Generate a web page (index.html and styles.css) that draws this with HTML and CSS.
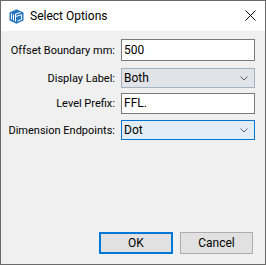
FILE: index.html
```html
<!DOCTYPE html>
<html>
<head>
<meta charset="utf-8">
<link rel="stylesheet" href="styles.css">
</head>
<body>
<div class="window">
  <div class="titlebar">
    <svg class="app-icon" width="15" height="15" viewBox="0 0 15 15">
      <path d="M7.5 0.3 L14.5 3.5 V11.5 L7.5 14.7 L0.5 11.5 V3.5 Z" fill="#2a78c0"/>
      <path d="M2.5 4.5 V10.5 M4.5 5.5 V11.5" fill="none" stroke="#fff" stroke-width="1"/>
      <path d="M6.5 5 L11.5 3.5 M6.5 7.5 L12.5 5.8 M6.5 5 V12.5 M12.5 5.8 V10.5 L8.5 12" fill="none" stroke="#fff" stroke-width="1"/>
    </svg>
    <span class="title">Select Options</span>
    <svg class="close" width="11" height="11" viewBox="0 0 11 11">
      <path d="M0.5 0.5 L10.5 10.5 M10.5 0.5 L0.5 10.5" stroke="#000" stroke-width="1"/>
    </svg>
  </div>
  <div class="form">
    <div class="row row1">
      <label class="label">Offset Boundary mm:</label>
      <div class="textbox tall">500</div>
    </div>
    <div class="row row2">
      <label class="label">Display Label:</label>
      <div class="combo">
        <span>Both</span>
        <svg class="chev" width="8" height="5" viewBox="0 0 8 5"><path d="M0.5 0.5 L4 4 L7.5 0.5" fill="none" stroke="#606060" stroke-width="1"/></svg>
      </div>
    </div>
    <div class="row row3">
      <label class="label">Level Prefix:</label>
      <div class="textbox">FFL.</div>
    </div>
    <div class="row row4">
      <label class="label">Dimension Endpoints:</label>
      <div class="combo focused">
        <span>Dot</span>
        <svg class="chev" width="8" height="5" viewBox="0 0 8 5"><path d="M0.5 0.5 L4 4 L7.5 0.5" fill="none" stroke="#606060" stroke-width="1"/></svg>
      </div>
    </div>
  </div>
  <div class="footer">
    <button class="btn default">OK</button>
    <button class="btn">Cancel</button>
  </div>
</div>
</body>
</html>
```
FILE: styles.css
```css
html, body {
  margin: 0;
  padding: 0;
  background: #f0f0f0;
}
body {
  font-family: Roboto, "Liberation Sans", Arial, sans-serif;
  font-size: 12px;
  color: #000;
}
.window {
  width: 266px;
  height: 265px;
  box-sizing: border-box;
  border: 1px solid #6a6a6a;
  background: #f0f0f0;
  display: flex;
  flex-direction: column;
}
.titlebar {
  height: 30px;
  background: #fff;
  display: flex;
  align-items: center;
  padding-left: 8px;
}
.app-icon {
  display: block;
  margin-top: 1px;
}
.title {
  margin-left: 6px;
  font-size: 12px;
}
.close {
  display: block;
  margin-left: auto;
  margin-right: 9px;
  margin-top: -1px;
}
.form {
  display: flex;
  flex-direction: column;
  padding-right: 10px;
}
.row {
  display: grid;
  grid-template-columns: minmax(0, 1fr) 134px;
  column-gap: 6px;
  align-items: center;
}
.row1 { margin-top: 8px; }
.row2 { margin-top: 7px; }
.row3 { margin-top: 5px; }
.row4 { margin-top: 6px; }
.label {
  text-align: right;
  white-space: nowrap;
  font-size: 11px;
}
.textbox {
  height: 21px;
  box-sizing: border-box;
  border: 1px solid #7a7a7a;
  background: #fff;
  padding-left: 2px;
  line-height: 19px;
}
.textbox.tall {
  height: 22px;
  line-height: 20px;
}
.combo {
  height: 20px;
  box-sizing: border-box;
  border: 1px solid #a3b2c0;
  background: #e0e4e8;
  padding: 0 6px 0 2px;
  display: flex;
  align-items: center;
  justify-content: space-between;
}
.combo.focused {
  border-color: #0078d7;
  background: #e3edf7;
}
.chev {
  display: block;
}
.footer {
  margin-top: auto;
  display: flex;
  justify-content: flex-end;
  gap: 7px;
  padding: 0 12px 10px 0;
}
.btn {
  width: 73px;
  height: 22px;
  box-sizing: border-box;
  border: 1px solid #adadad;
  background: #e1e1e1;
  font-family: Roboto, "Liberation Sans", Arial, sans-serif;
  font-size: 12px;
  color: #000;
  padding: 0;
  margin: 0;
}
.btn.default {
  border: 2px solid #0078d7;
  width: 74px;
}
```
